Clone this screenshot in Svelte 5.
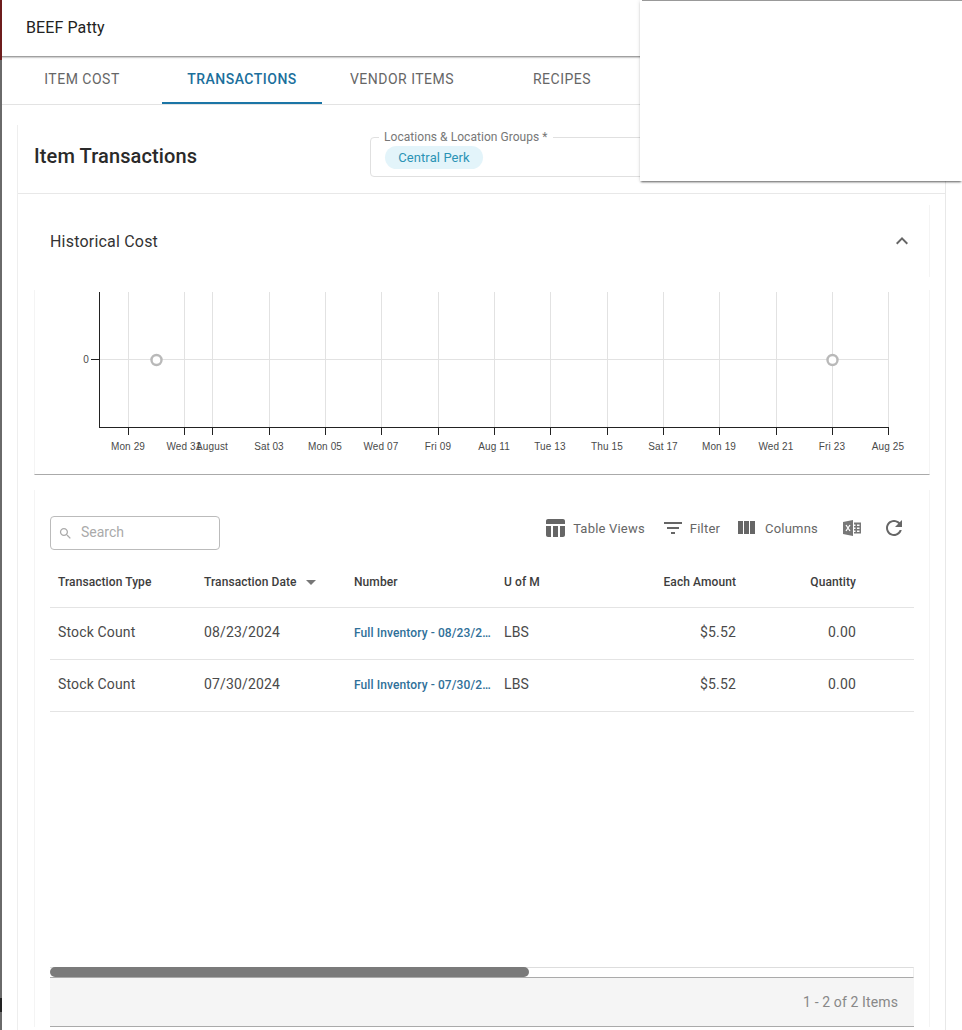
<script lang="ts">
  const tabs = ['Item Cost', 'Transactions', 'Vendor Items', 'Recipes'];
  const activeTab = 'Transactions';

  const ticks = [
    { x: 128, label: 'Mon 29' },
    { x: 184, label: 'Wed 31' },
    { x: 212, label: 'August' },
    { x: 269, label: 'Sat 03' },
    { x: 325, label: 'Mon 05' },
    { x: 381, label: 'Wed 07' },
    { x: 438, label: 'Fri 09' },
    { x: 494, label: 'Aug 11' },
    { x: 550, label: 'Tue 13' },
    { x: 607, label: 'Thu 15' },
    { x: 663, label: 'Sat 17' },
    { x: 719, label: 'Mon 19' },
    { x: 776, label: 'Wed 21' },
    { x: 832, label: 'Fri 23' },
    { x: 888, label: 'Aug 25' }
  ];
  const points = [156, 832];

  const rows = [
    { type: 'Stock Count', date: '08/23/2024', number: 'Full Inventory - 08/23/2024', uom: 'LBS', amount: '$5.52', qty: '0.00' },
    { type: 'Stock Count', date: '07/30/2024', number: 'Full Inventory - 07/30/2024', uom: 'LBS', amount: '$5.52', qty: '0.00' }
  ];
</script>

<div class="page">
  <div class="edge"></div>

  <header class="title-bar">BEEF Patty</header>

  <nav class="tabs">
    {#each tabs as tab}
      <div class="tab" class:active={tab === activeTab}>{tab}</div>
    {/each}
  </nav>

  <section class="outer-card">
    <div class="outer-head">
      <h2>Item Transactions</h2>
      <div class="location-field">
        <span class="field-label">Locations &amp; Location Groups *</span>
        <span class="chip">Central Perk</span>
      </div>
    </div>

    <div class="history-head">
      <span>Historical Cost</span>
      <svg class="chevron" viewBox="0 0 24 24" width="24" height="24"><path d="M12 8l-6 6 1.41 1.41L12 10.83l4.59 4.58L18 14z" /></svg>
    </div>

    <div class="chart-panel">
      <svg class="chart" width="896" height="184" viewBox="34 290 896 184">
        {#each ticks as t}
          <line x1={t.x + 0.5} x2={t.x + 0.5} y1="292" y2="427" stroke="#e2e2e2" />
          <line x1={t.x + 0.5} x2={t.x + 0.5} y1="427" y2="435" stroke="#222" />
          <text x={t.x} y="450" text-anchor="middle">{t.label}</text>
        {/each}
        <line x1="99" x2="888" y1="359.5" y2="359.5" stroke="#e2e2e2" />
        <line x1="99.5" x2="99.5" y1="292" y2="427" stroke="#222" />
        <line x1="99" x2="889" y1="427.5" y2="427.5" stroke="#222" />
        <line x1="91" x2="99" y1="359.5" y2="359.5" stroke="#222" />
        <text x="89" y="363" text-anchor="end">0</text>
        {#each points as p}
          <circle cx={p + 0.5} cy="360" r="5" fill="#fff" stroke="#b9b9b9" stroke-width="2.4" />
        {/each}
      </svg>
    </div>

    <div class="table-panel">
      <div class="toolbar">
        <div class="search">
          <svg viewBox="0 0 24 24" width="15" height="15"><path d="M15.5 14h-.79l-.28-.27C15.41 12.59 16 11.11 16 9.5 16 5.91 13.09 3 9.5 3S3 5.91 3 9.5 5.91 16 9.5 16c1.61 0 3.09-.59 4.23-1.57l.27.28v.79l5 4.99L20.49 19l-4.99-5zm-6 0C7.01 14 5 11.99 5 9.5S7.01 5 9.5 5 14 7.01 14 9.5 11.99 14 9.5 14z" /></svg>
          <span>Search</span>
        </div>
        <div class="actions">
          <div class="action views">
            <svg viewBox="0 0 24 24" width="24" height="24"><path d="M10 10.02h5V21h-5zM17 21h3c1.1 0 2-.9 2-2v-9h-5v11zm3-18H5c-1.1 0-2 .9-2 2v3h19V5c0-1.1-.9-2-2-2zM3 19c0 1.1.9 2 2 2h3V10H3v9z" /></svg>
            Table Views
          </div>
          <div class="action filter">
            <svg viewBox="0 0 24 24" width="24" height="24"><path d="M10 18h4v-2h-4v2zM3 6v2h18V6H3zm3 7h12v-2H6v2z" /></svg>
            Filter
          </div>
          <div class="action columns">
            <svg viewBox="0 0 24 24" width="24" height="24"><path d="M10 18h5V5h-5v13zm-6 0h5V5H4v13zM16 5v13h5V5h-5z" /></svg>
            Columns
          </div>
          <svg class="excel" viewBox="0 0 18 16" width="18" height="16">
            <path d="M0 2 L10 0 V16 L0 14 Z" fill="#777" />
            <path d="M3 5 L7 11 M7 5 L3 11" stroke="#fff" stroke-width="1.3" />
            <path d="M11 2.5h7v11h-7v-1.5h1.5v-1.5H11V9h1.5V7.5H11V6h1.5V4.5H11zM14 4.5V6h2.5V4.5zM14 7.5V9h2.5V7.5zM14 10.5V12h2.5v-1.5z" fill="#777" fill-rule="evenodd" />
          </svg>
          <svg class="refresh" viewBox="0 0 24 24" width="24" height="24"><path d="M17.65 6.35C16.2 4.9 14.21 4 12 4c-4.42 0-7.99 3.58-7.99 8s3.57 8 7.99 8c3.73 0 6.84-2.55 7.73-6h-2.08c-.82 2.33-3.04 4-5.65 4-3.31 0-6-2.69-6-6s2.69-6 6-6c1.66 0 3.14.69 4.22 1.78L13 11h7V4l-2.35 2.35z" /></svg>
        </div>
      </div>

      <div class="grid-wrap">
        <table>
          <colgroup>
            <col style="width:146px" />
            <col style="width:150px" />
            <col style="width:150px" />
            <col style="width:98px" />
            <col style="width:150px" />
            <col style="width:120px" />
            <col />
          </colgroup>
          <thead>
            <tr>
              <th>Transaction Type</th>
              <th>Transaction Date <span class="caret"></span></th>
              <th>Number</th>
              <th>U of M</th>
              <th class="num">Each Amount</th>
              <th class="num">Quantity</th>
              <th></th>
            </tr>
          </thead>
          <tbody>
            {#each rows as row}
              <tr>
                <td>{row.type}</td>
                <td>{row.date}</td>
                <td class="link"><div>{row.number}</div></td>
                <td>{row.uom}</td>
                <td class="num">{row.amount}</td>
                <td class="num">{row.qty}</td>
                <td></td>
              </tr>
            {/each}
          </tbody>
        </table>

        <div class="scroll-track"><div class="scroll-thumb"></div></div>
        <div class="pager">1 - 2 of 2 Items</div>
      </div>
    </div>
  </section>

  <div class="popup"></div>
</div>

<style>
  :global(body) {
    background: #fff;
    font-family: Roboto, "Liberation Sans", sans-serif;
  }
  .page {
    position: relative;
    height: 1030px;
    overflow: hidden;
    background: #fff;
  }
  .edge {
    position: absolute;
    left: 0;
    top: 0;
    bottom: 0;
    width: 2px;
    background: linear-gradient(#6d1c1c 0, #6d1c1c 60px, #6a6a6a 60px, #6a6a6a 998px, #222 998px, #222 1012px, #6a6a6a 1012px);
  }
  .title-bar {
    height: 56px;
    box-sizing: border-box;
    padding: 18px 0 0 26px;
    font-size: 16px;
    line-height: 19px;
    letter-spacing: 0.1px;
    color: #222;
    box-shadow: 0 1px 2px rgba(0, 0, 0, 0.55);
  }
  .tabs {
    display: flex;
    height: 48px;
    margin-left: 2px;
    border-bottom: 1px solid #e3e3e3;
  }
  .tab {
    width: 160px;
    box-sizing: border-box;
    padding-top: 15px;
    text-align: center;
    font-size: 14px;
    font-weight: 400;
    line-height: 17px;
    letter-spacing: 0.5px;
    text-transform: uppercase;
    color: #666;
  }
  .tab.active {
    color: #1b6f9c;
    font-weight: 500;
    border-bottom: 2px solid #1b75a6;
    height: 48px;
  }
  .outer-card {
    margin: 20px 16px 0 17px;
    border-left: 1px solid #eee;
    border-right: 1px solid #e8e8e8;
    height: 920px;
  }
  .outer-head {
    display: flex;
    align-items: flex-start;
    height: 69px;
    box-sizing: border-box;
    border-bottom: 1px solid #e8e8e8;
  }
  h2 {
    margin: 20px 0 0 16px;
    width: 336px;
    font-size: 20px;
    font-weight: 500;
    line-height: 23px;
    letter-spacing: 0.12px;
    color: #2a2a2a;
  }
  .location-field {
    position: relative;
    margin-top: 12px;
    width: 400px;
    height: 40px;
    box-sizing: border-box;
    border: 1px solid #e0e0e0;
    border-radius: 4px;
    padding: 8px 0 0 14px;
  }
  .field-label {
    position: absolute;
    left: 8px;
    top: -8px;
    padding: 0 5px;
    background: #fff;
    font-size: 12px;
    line-height: 14px;
    letter-spacing: 0.05px;
    color: #777;
  }
  .chip {
    display: block;
    width: 98px;
    height: 23px;
    border-radius: 12px;
    background: #e3f4fa;
    color: #2b93b5;
    font-size: 13px;
    line-height: 23px;
    letter-spacing: 0.1px;
    text-align: center;
  }
  .history-head {
    display: flex;
    justify-content: space-between;
    align-items: center;
    margin: 11px 15px 0 16px;
    height: 72px;
    padding: 0 16px;
    font-size: 16px;
    letter-spacing: 0.2px;
    color: #333;
    border-right: 1px solid #f4f4f4;
  }
  .chevron path {
    fill: #666;
  }
  .history-head .chevron {
    margin-right: -1px;
  }
  .chart-panel {
    margin: 13px 15px 0 16px;
    height: 184px;
    border-bottom: 1px solid #aaa;
    border-left: 1px solid #f4f4f4;
    border-right: 1px solid #f4f4f4;
    overflow: hidden;
  }
  .chart {
    display: block;
    margin-left: -1px;
  }
  .chart text {
    font-family: "Liberation Sans", Arial, sans-serif;
    font-size: 10px;
    letter-spacing: 0.12px;
    fill: #4a4a4a;
  }
  .table-panel {
    margin: 15px 15px 0 16px;
    padding: 26px 15px 0;
    border-left: 1px solid #f4f4f4;
    border-right: 1px solid #f4f4f4;
  }
  .toolbar {
    display: flex;
    align-items: flex-start;
    justify-content: space-between;
    height: 40px;
  }
  .search {
    display: flex;
    align-items: center;
    gap: 8px;
    width: 170px;
    height: 34px;
    box-sizing: border-box;
    border: 1px solid #bbb;
    border-radius: 4px;
    padding-left: 7px;
    font-size: 14px;
    color: #aaa;
  }
  .search span {
    margin-bottom: 2px;
  }
  .search svg path {
    fill: #aaa;
  }
  .actions {
    display: flex;
    align-items: center;
    height: 24px;
    margin-right: 8px;
  }
  .action {
    display: flex;
    align-items: center;
    font-size: 13px;
    letter-spacing: 0.2px;
    color: #666;
    white-space: nowrap;
  }
  .action svg path,
  .refresh path {
    fill: #666;
  }
  .views svg {
    margin-right: 6px;
  }
  .views {
    margin-left: -1px;
    margin-right: 16px;
  }
  .filter svg {
    margin-right: 5px;
  }
  .filter {
    margin-right: 14px;
  }
  .columns svg {
    margin-right: 7px;
  }
  .excel {
    margin-left: 25px;
  }
  .refresh {
    margin-left: 21px;
  }
  .grid-wrap {
    width: 864px;
  }
  table {
    width: 864px;
    table-layout: fixed;
    border-collapse: collapse;
  }
  th,
  td {
    padding: 0 8px;
    text-align: left;
    border-bottom: 1px solid #e4e4e4;
    white-space: nowrap;
  }
  th {
    height: 51px;
    font-size: 12px;
    font-weight: 500;
    letter-spacing: 0.08px;
    color: #3d3d3d;
  }
  td {
    height: 47px;
    padding-bottom: 4px;
    font-size: 14px;
    letter-spacing: 0.15px;
    color: #4a4a4a;
  }
  .num {
    text-align: right;
  }
  .caret {
    display: inline-block;
    margin-left: 6px;
    border-left: 5px solid transparent;
    border-right: 5px solid transparent;
    border-top: 5px solid #777;
    vertical-align: 1px;
  }
  .link {
    padding-right: 4px;
  }
  .link div {
    padding-top: 2px;
    overflow: hidden;
    text-overflow: ellipsis;
    font-size: 12px;
    font-weight: 500;
    letter-spacing: 0.1px;
    color: #2f7099;
  }
  .scroll-track {
    position: relative;
    margin-top: 255px;
    height: 9px;
    border-top: 1px solid #ddd;
    border-bottom: 1px solid #aaa;
    border-right: 1px solid #eee;
  }
  .scroll-thumb {
    position: absolute;
    left: 0;
    top: -1px;
    width: 479px;
    height: 10px;
    border-radius: 5px;
    background: #7a7a7a;
  }
  .pager {
    height: 49px;
    box-sizing: border-box;
    padding-right: 16px;
    background: #f5f5f5;
    border-bottom: 1px solid #aaa;
    font-size: 14px;
    line-height: 49px;
    letter-spacing: 0.12px;
    text-align: right;
    color: #888;
  }
  .popup {
    position: absolute;
    left: 640px;
    top: 0;
    right: 0;
    height: 181px;
    background: #fff;
    box-shadow: 0 2px 2px -1px rgba(0, 0, 0, 0.6), 0 0 4px rgba(0, 0, 0, 0.12);
  }
  .popup::before {
    content: "";
    position: absolute;
    left: 2px;
    right: 0;
    top: 0;
    height: 1px;
    background: #999;
  }
</style>
